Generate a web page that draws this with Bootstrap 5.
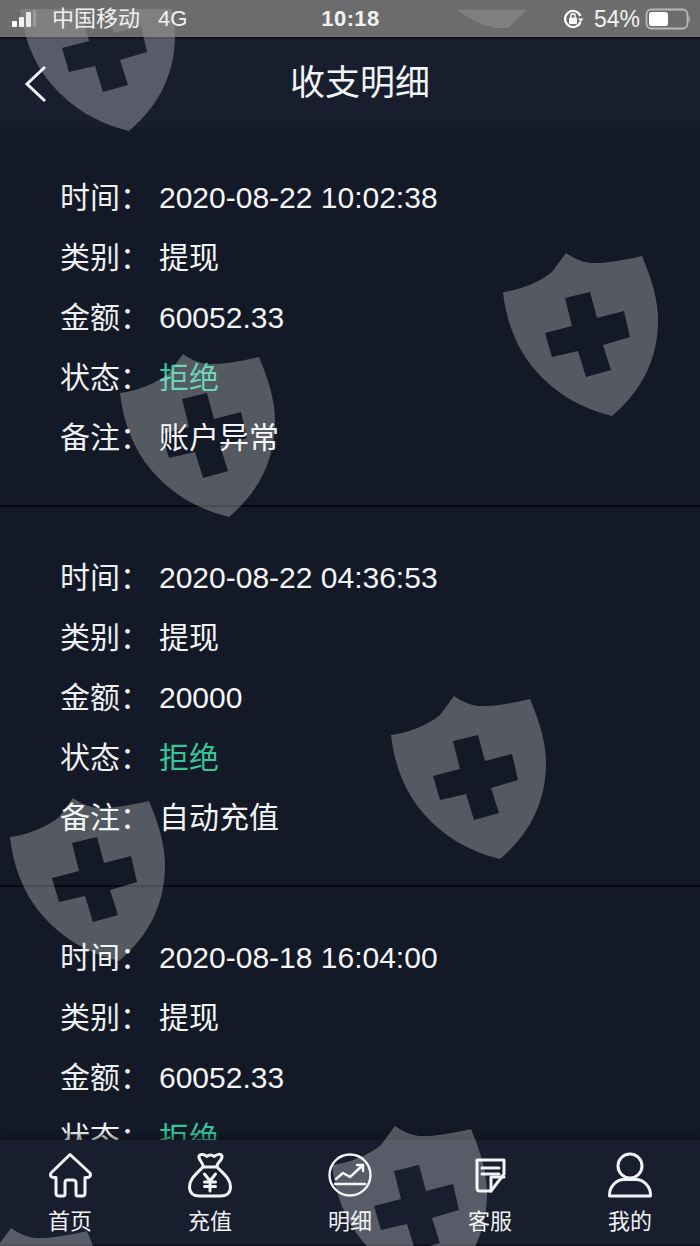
<!DOCTYPE html>
<html lang="zh-CN">
<head>
<meta charset="utf-8">
<title>收支明细</title>
<link rel="stylesheet" href="https://cdn.jsdelivr.net/npm/bootstrap@5.3.0/dist/css/bootstrap.min.css">
<style>
html,body{height:100%;margin:0}
body{background:#131926;overflow:hidden;font-family:"Liberation Sans","Noto Sans CJK SC",sans-serif;color:#f2f3f5}
.phone-shell{width:700px;height:1246px;position:relative;overflow:hidden}
.status-strip{height:37px;flex:none;background:#6c6c6e;color:#f1f1f1;font-size:22px;line-height:1;position:relative;padding:1px 10px 0 12px}
.status-strip>*{position:relative;z-index:2}
.status-strip>.strip-wm{position:absolute;left:0;top:0;z-index:1}
.status-edge{flex:1 1 0}
.status-carrier{width:106px}
.status-time{font-weight:600;font-size:22px;letter-spacing:.4px;margin-right:1px}
.pct-text{font-size:23px;margin-right:2px}
.lock-ico{margin-right:10px}
.head-bar{height:90px;flex:none;background:#181e2e;border-top:2px solid #10131e;position:relative;padding-left:20px}
.head-title{font-size:35px;line-height:1;color:#f2f3f5;margin-top:-2px}
.back-ico{position:absolute;left:23px;top:26px}
.ledger{min-height:0;overflow:hidden}
.ledger-item{height:380px;padding:41px 0 37px 60px;border-bottom:2px solid #06080f}
.ledger-row{height:60px;font-size:30px;line-height:60px;white-space:nowrap}
.ledger-key{width:99px;flex:none;color:#eef0f2}
.ledger-val{color:#f4f5f6}
.ledger-val.is-rej{color:#35c79a}
.tab-bar{height:106px;background:#181e2e;flex:none;box-shadow:0 -4px 6px rgba(10,13,22,.45);border-bottom:2px solid #10131e}
.tab-cell{width:140px;padding-top:12px;color:#f0f1f3;font-size:22px;line-height:1}
.tab-ico{display:block;width:46px;height:46px;margin-bottom:13px}
.tab-ico *{fill:none;stroke:#f2f3f5;stroke-width:3;stroke-linecap:round;stroke-linejoin:round}
.tab-ico.thin-ico *{stroke-width:2.400}
.wm-layer{position:absolute;left:0;top:0;pointer-events:none;z-index:5}
</style>
</head>
<body>
<div class="phone-shell d-flex flex-column">

  <div class="status-strip d-flex align-items-center">
    <svg class="strip-wm" width="700" height="37" viewBox="0 0 700 37" aria-hidden="true">
      <defs><clipPath id="stripClip"><rect x="0" y="9" width="700" height="28"/></clipPath></defs>
      <g clip-path="url(#stripClip)" fill="#fff" fill-opacity=".13">
        <use href="#wmShield" transform="translate(-3,-55)"/>
        <path d="M457 9.500H527L508 28H495Q474 24 457 9.500Z"/>
      </g>
    </svg>
    <div class="status-edge d-flex align-items-center">
      <svg width="24" height="18" viewBox="0 0 24 18" aria-hidden="true">
        <rect x="0" y="11" width="5" height="6" rx="1" fill="#fff"/>
        <rect x="7" y="7" width="5" height="10" rx="1" fill="#f4f4f4"/>
        <rect x="14" y="2" width="5" height="15" rx="1" fill="#e8e8e8"/>
        <rect x="21" y="0" width="3" height="17" rx="1" fill="#9a9a9c"/>
      </svg>
      <span class="status-carrier ms-3">中国移动</span>
      <span>4G</span>
    </div>
    <div class="status-time">10:18</div>
    <div class="status-edge d-flex align-items-center justify-content-end">
      <svg class="lock-ico" width="22" height="22" viewBox="0 0 22 22" aria-hidden="true">
        <path d="M18.500 8A8 8 0 1 0 18.500 14" fill="none" stroke="#fff" stroke-width="2.200"/>
        <path d="M16 10.500h5.500l-2.700 3.500z" fill="#fff"/>
        <rect x="7" y="9.500" width="8" height="6.500" rx="1" fill="#fff"/>
        <path d="M8.800 9.500V8a2.200 2.200 0 0 1 4.400 0v1.500" fill="none" stroke="#fff" stroke-width="1.400"/>
      </svg>
      <span class="pct-text">54%</span>
      <svg width="48" height="22" viewBox="0 0 48 22" aria-hidden="true">
        <rect x="4.500" y="1.500" width="41" height="19" rx="5" fill="none" stroke="#b8b8b9" stroke-width="1.800"/>
        <rect x="7" y="4" width="19" height="14" rx="2.500" fill="#fff"/>
        <path d="M47 8.500q1 2.500 0 5" fill="none" stroke="#a8a8a9" stroke-width="1.600"/>
      </svg>
    </div>
  </div>

  <div class="head-bar d-flex align-items-center justify-content-center">
    <svg class="back-ico" width="26" height="38" viewBox="0 0 26 38" aria-hidden="true">
      <path d="M22 2L4 19L22 36" fill="none" stroke="#f4f5f6" stroke-width="3"/>
    </svg>
    <div class="head-title">收支明细</div>
  </div>

  <div class="ledger flex-grow-1">
    <div class="ledger-item">
      <div class="ledger-row d-flex"><span class="ledger-key">时间：</span><span class="ledger-val">2020-08-22 10:02:38</span></div>
      <div class="ledger-row d-flex"><span class="ledger-key">类别：</span><span class="ledger-val">提现</span></div>
      <div class="ledger-row d-flex"><span class="ledger-key">金额：</span><span class="ledger-val">60052.33</span></div>
      <div class="ledger-row d-flex"><span class="ledger-key">状态：</span><span class="ledger-val is-rej">拒绝</span></div>
      <div class="ledger-row d-flex"><span class="ledger-key">备注：</span><span class="ledger-val">账户异常</span></div>
    </div>
    <div class="ledger-item">
      <div class="ledger-row d-flex"><span class="ledger-key">时间：</span><span class="ledger-val">2020-08-22 04:36:53</span></div>
      <div class="ledger-row d-flex"><span class="ledger-key">类别：</span><span class="ledger-val">提现</span></div>
      <div class="ledger-row d-flex"><span class="ledger-key">金额：</span><span class="ledger-val">20000</span></div>
      <div class="ledger-row d-flex"><span class="ledger-key">状态：</span><span class="ledger-val is-rej">拒绝</span></div>
      <div class="ledger-row d-flex"><span class="ledger-key">备注：</span><span class="ledger-val">自动充值</span></div>
    </div>
    <div class="ledger-item">
      <div class="ledger-row d-flex"><span class="ledger-key">时间：</span><span class="ledger-val">2020-08-18 16:04:00</span></div>
      <div class="ledger-row d-flex"><span class="ledger-key">类别：</span><span class="ledger-val">提现</span></div>
      <div class="ledger-row d-flex"><span class="ledger-key">金额：</span><span class="ledger-val">60052.33</span></div>
      <div class="ledger-row d-flex"><span class="ledger-key">状态：</span><span class="ledger-val is-rej">拒绝</span></div>
    </div>
  </div>

  <div class="tab-bar d-flex">
    <div class="tab-cell d-flex flex-column align-items-center">
      <svg class="tab-ico" viewBox="0 0 46 46" aria-hidden="true">
        <path d="M23 2.500L43 21Q45 24 41 25.500H38V41Q38 44 35 44H31Q29 44 29 42V31Q29 28 26 28H20Q18 28 18 31V42Q18 44 16 44H12Q9 44 9 41V25.500H6Q2 24 4 21Z"/>
      </svg>
      <span>首页</span>
    </div>
    <div class="tab-cell d-flex flex-column align-items-center">
      <svg class="tab-ico" viewBox="0 0 46 46" aria-hidden="true">
        <path d="M16 15C9 22 2.500 27 2.500 35C2.500 41 6.500 44 12.500 44H33.500C39.500 44 43.500 41 43.500 35C43.500 27 37 22 30 15Z"/>
        <path d="M16 15C17 11 11 8 12 4C13 1 18 3 20 4.500C22 2.500 25 2.500 27 4.500C30 2.500 34 1 35 4C36 8 29 11 30 15"/>
        <path d="M17.500 22L23 29L28.500 22M23 29V39M17.500 30H28.500M17.500 34.500H28.500" stroke-width="2.500"/>
      </svg>
      <span>充值</span>
    </div>
    <div class="tab-cell d-flex flex-column align-items-center">
      <svg class="tab-ico thin-ico" viewBox="0 0 46 46" aria-hidden="true">
        <circle cx="23" cy="23" r="20.500"/>
        <path d="M8 32H38"/>
        <path d="M9 27L16 21L23 25L36 13M30 13H36V19"/>
      </svg>
      <span>明细</span>
    </div>
    <div class="tab-cell d-flex flex-column align-items-center">
      <svg class="tab-ico" viewBox="0 0 46 46" aria-hidden="true">
        <path d="M10 8H37V22L24 39H13Q10 39 10 36Z"/>
        <path d="M24 39V25H37"/>
        <path d="M15 16H32M15 22H32" stroke-width="2.500"/>
      </svg>
      <span>客服</span>
    </div>
    <div class="tab-cell d-flex flex-column align-items-center">
      <svg class="tab-ico" viewBox="0 0 46 46" aria-hidden="true">
        <circle cx="23" cy="14" r="12"/>
        <path d="M2.500 44C2 34 10 27.500 17 27.500H29C36 27.500 44 34 43.500 44Z"/>
      </svg>
      <span>我的</span>
    </div>
  </div>

  <svg class="wm-layer" width="700" height="1246" viewBox="0 0 700 1246" aria-hidden="true">
    <defs>
      <path id="wmShield" fill-rule="evenodd" d="M86 23Q97 31 110 33Q128 34 162 26C172 50 178 70 178 90C178 125 165 158 132 186C100 178 75 163 55 140C36 118 26 90 23 62C40 60 60 52 72 42ZM85 68L110 62L117 88L144 81L150 107L123 115L131 140L106 147L98 121L72 127L65 103L92 96Z"/>
      <clipPath id="belowStrip"><rect x="0" y="37" width="700" height="1209"/></clipPath>
    </defs>
    <g clip-path="url(#belowStrip)" fill="#fff" fill-opacity=".28">
      <use href="#wmShield" transform="translate(-3,-55)"/>
      <use href="#wmShield" transform="translate(480,230)"/>
      <use href="#wmShield" transform="translate(97,331)"/>
      <use href="#wmShield" transform="translate(368,673)"/>
      <use href="#wmShield" transform="translate(-13,775)"/>
      <use href="#wmShield" transform="translate(309,1103)"/>
      <use href="#wmShield" transform="translate(-75,1205)"/>
    </g>
  </svg>
</div>
<script src="https://cdn.jsdelivr.net/npm/bootstrap@5.3.0/dist/js/bootstrap.bundle.min.js"></script>
</body>
</html>
